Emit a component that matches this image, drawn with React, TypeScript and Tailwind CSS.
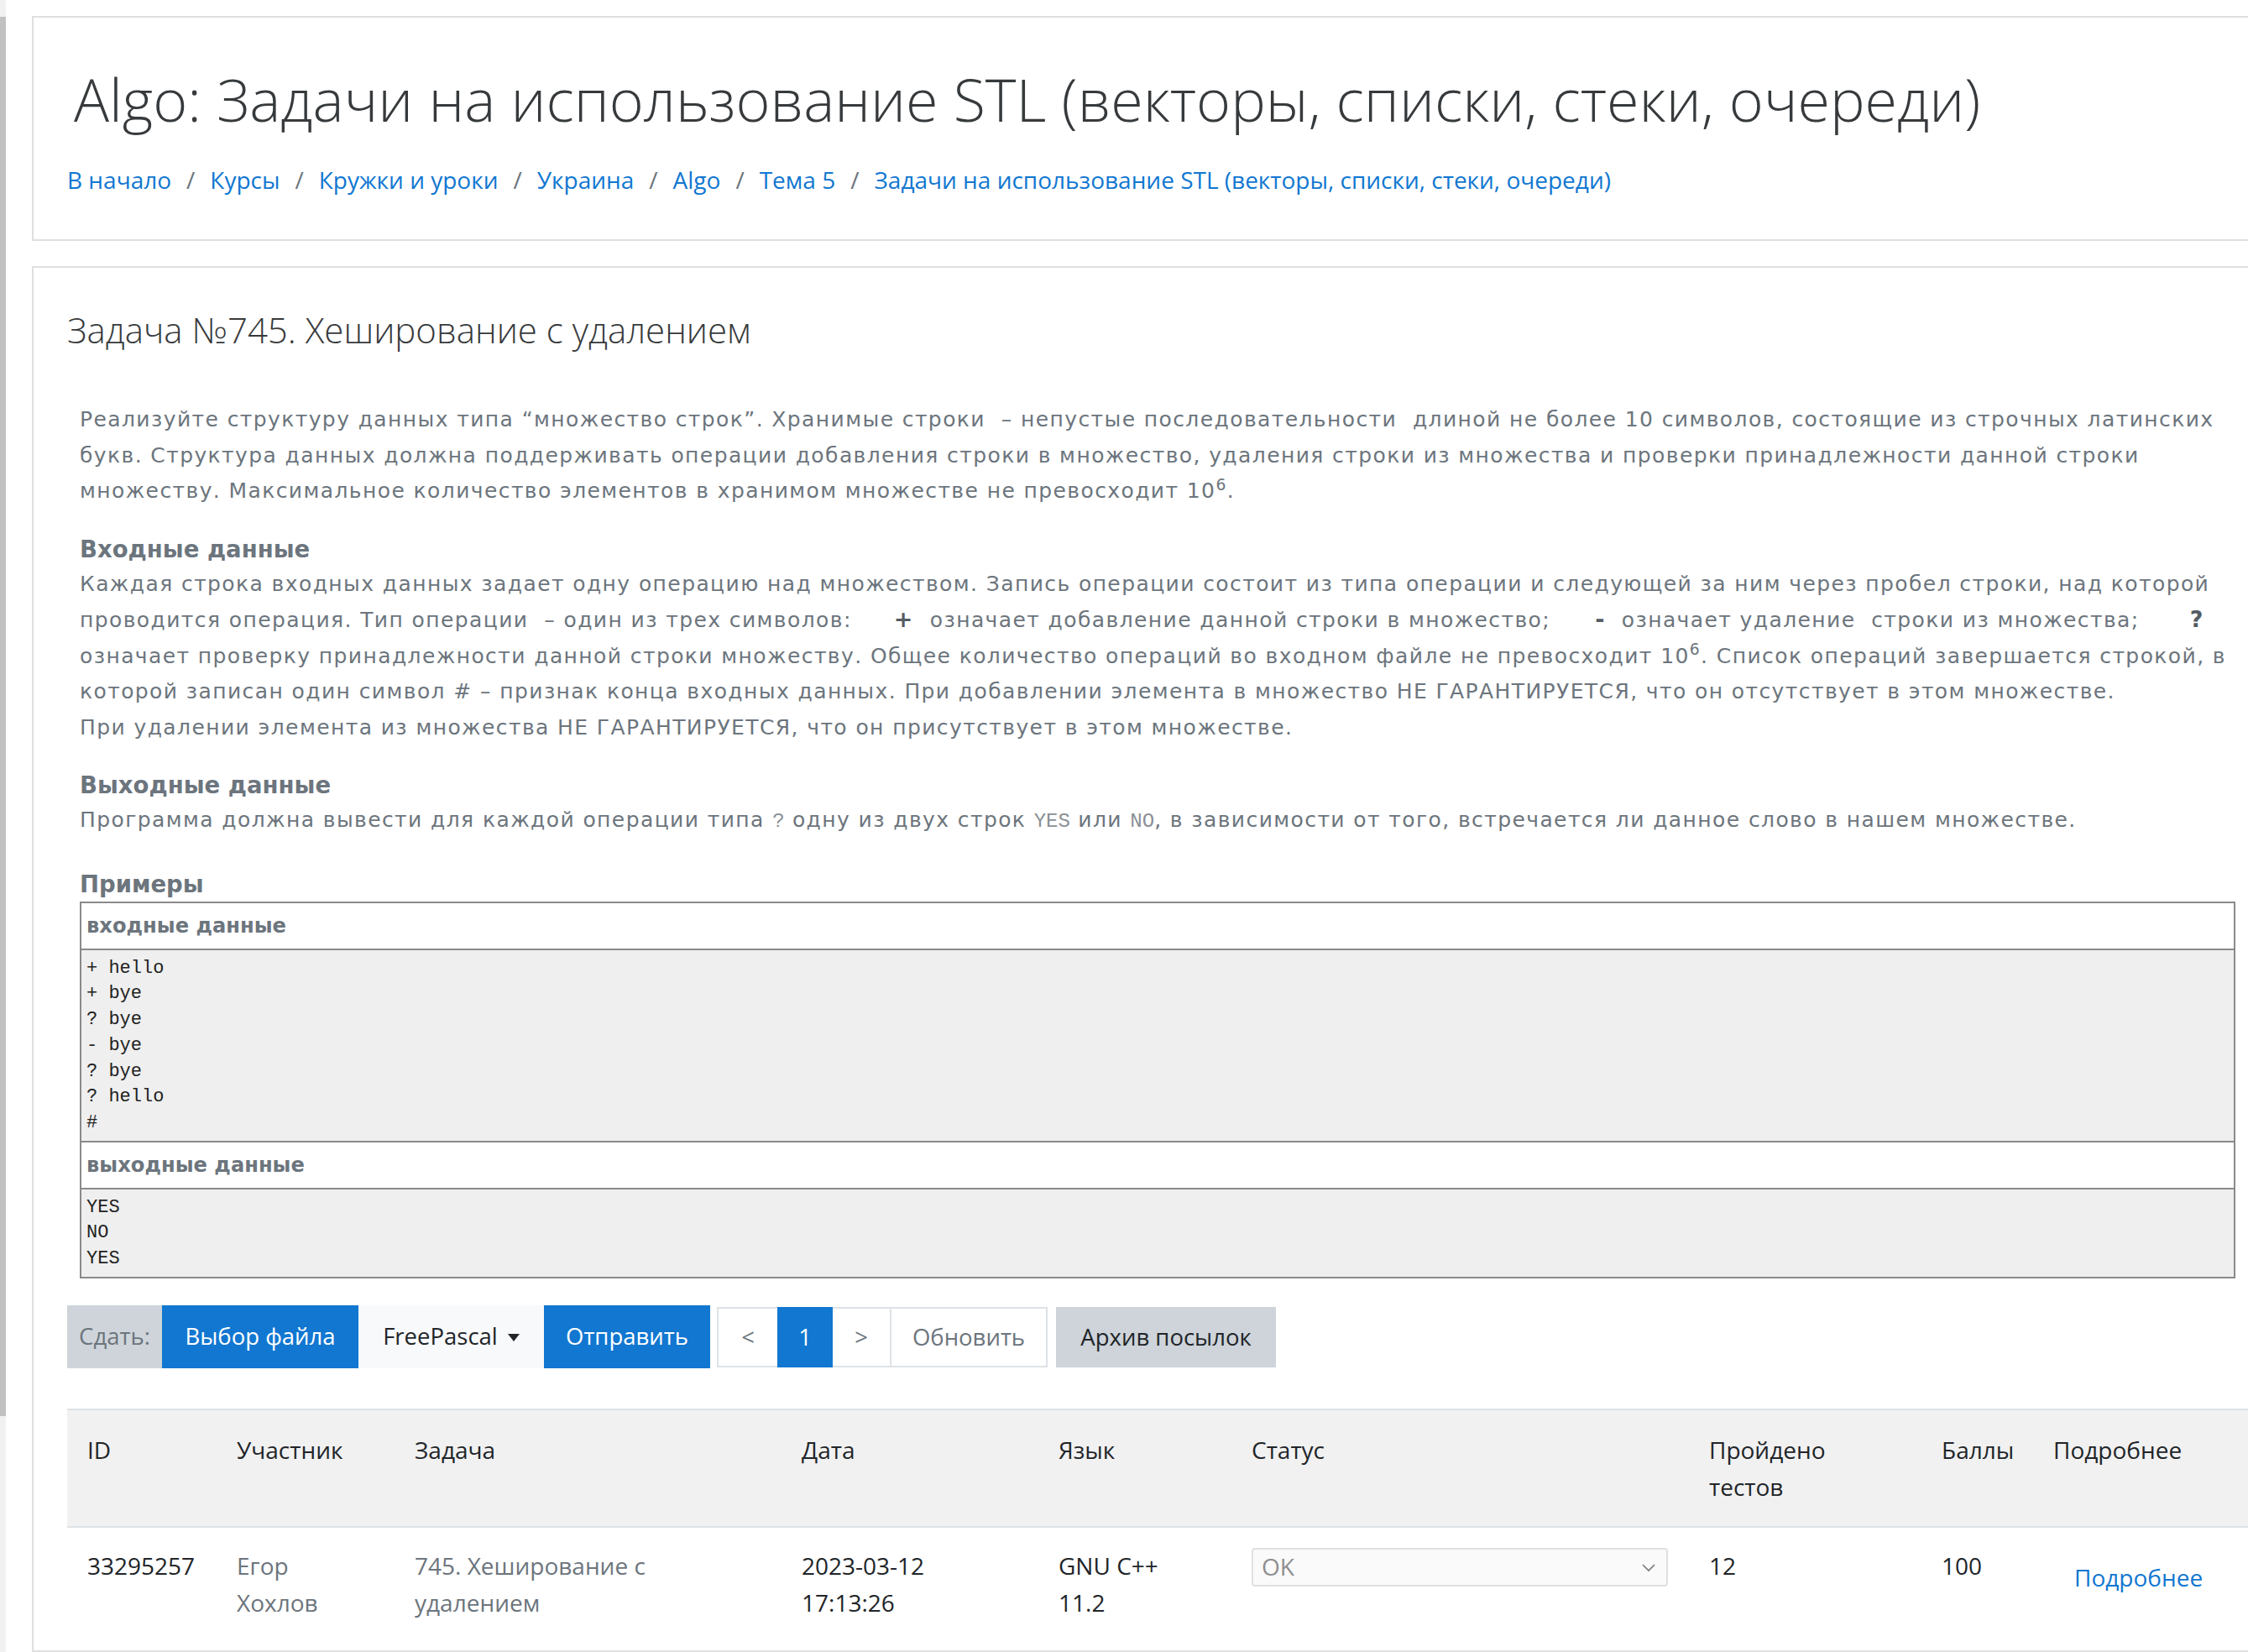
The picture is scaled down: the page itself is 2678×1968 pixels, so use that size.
import React from "react";

const crumbs = [
  "В начало",
  "Курсы",
  "Кружки и уроки",
  "Украина",
  "Algo",
  "Тема 5",
  "Задачи на использование STL (векторы, списки, стеки, очереди)",
];

function Card1() {
  return (
    <div className="h-[268px] border-2 border-[#dfdfdf] px-[40px] pt-[52px]">
      <div className="whitespace-nowrap pl-[8px] text-[70px] font-light leading-[90px] text-[#373a3c]">
        Algo: Задачи на использование STL (векторы, списки, стеки, очереди)
      </div>
      <div className="mt-[31px] flex whitespace-nowrap text-[28px] leading-[40px]">
        {crumbs.map((c, i) => (
          <React.Fragment key={c}>
            {i > 0 && <span className="px-[18px] text-[#6c757d]">/</span>}
            <span className="text-[#1177d1]">{c}</span>
          </React.Fragment>
        ))}
      </div>
    </div>
  );
}

function Code({ children }: { children: React.ReactNode }) {
  return <span className="font-['Liberation_Mono',monospace] text-[24px] tracking-normal text-[#8a9096]">{children}</span>;
}

function Statement() {
  return (
    <div className="mt-[59px] pl-[15px] pr-[17px] font-['DejaVu_Sans',sans-serif] text-[25px] leading-[42.5px] text-[#6c757d]">
      <div className="whitespace-pre tracking-[1.4px]">
        <div>Реализуйте структуру данных типа “множество строк”. Хранимые строки  – непустые последовательности  длиной не более 10 символов, состоящие из строчных латинских</div>
        <div>букв. Структура данных должна поддерживать операции добавления строки в множество, удаления строки из множества и проверки принадлежности данной строки</div>
        <div>
          множеству. Максимальное количество элементов в хранимом множестве не превосходит 10<sup>6</sup>.
        </div>
      </div>
      <div className="mt-[26px] text-[27.5px] font-bold leading-[42px] text-[#6c757d]">Входные данные</div>
      <div className="whitespace-pre tracking-[1.4px]">
        <div>Каждая строка входных данных задает одну операцию над множеством. Запись операции состоит из типа операции и следующей за ним через пробел строки, над которой</div>
        <div>
          проводится операция. Тип операции  – один из трех символов:
          <b className="ml-[50px] mr-[19px] text-[27px] text-[#555c63]">+</b>
          означает добавление данной строки в множество;
          <b className="ml-[53px] mr-[19px] text-[27px] text-[#555c63]">-</b>
          означает удаление  строки из множества;
          <b className="ml-[60px] text-[27px] text-[#555c63]">?</b>
        </div>
        <div>
          означает проверку принадлежности данной строки множеству. Общее количество операций во входном файле не превосходит 10<sup>6</sup>. Список операций завершается строкой, в
        </div>
        <div>которой записан один символ # – признак конца входных данных. При добавлении элемента в множество НЕ ГАРАНТИРУЕТСЯ, что он отсутствует в этом множестве.</div>
        <div>При удалении элемента из множества НЕ ГАРАНТИРУЕТСЯ, что он присутствует в этом множестве.</div>
      </div>
      <div className="mt-[26px] text-[27.5px] font-bold leading-[42px] text-[#6c757d]">Выходные данные</div>
      <div className="whitespace-pre tracking-[1.4px]">
        Программа должна вывести для каждой операции типа <Code>?</Code> одну из двух строк <Code>YES</Code> или <Code>NO</Code>, в зависимости от того, встречается ли данное слово в нашем множестве.
      </div>
      <div className="mt-[31px] text-[27.5px] font-bold leading-[42px] text-[#6c757d]">Примеры</div>
      <div className="border-2 border-[#8a8a8a]">
        <div className="h-[54px] bg-white px-[6px] text-[24.2px] font-bold leading-[54px] text-[#6c757d]">входные данные</div>
        <div className="h-[229px] border-t-2 border-[#8a8a8a] bg-[#efefef] px-[6px] pt-[7px] font-['Liberation_Mono',monospace] text-[22px] leading-[30.8px] text-[#222]">
          {["+ hello", "+ bye", "? bye", "- bye", "? bye", "? hello", "#"].map((l, i) => (
            <div key={i} className="whitespace-pre">{l}</div>
          ))}
        </div>
        <div className="h-[56px] border-t-2 border-[#8a8a8a] bg-white px-[6px] text-[24.2px] font-bold leading-[54px] text-[#6c757d]">выходные данные</div>
        <div className="h-[106px] border-t-2 border-[#8a8a8a] bg-[#efefef] px-[6px] pt-[7px] font-['Liberation_Mono',monospace] text-[22px] leading-[30.8px] text-[#222]">
          {["YES", "NO", "YES"].map((l, i) => (
            <div key={i}>{l}</div>
          ))}
        </div>
      </div>
    </div>
  );
}

function Toolbar() {
  return (
    <div className="mt-[32px] flex items-start text-[27.5px]">
      <div className="flex h-[75px] w-[113px] items-center justify-center bg-[#ced4da] text-[#6c757d]">Сдать:</div>
      <div className="flex h-[75px] w-[234px] items-center justify-center bg-[#1177d1] text-white">Выбор файла</div>
      <div className="flex h-[75px] w-[221px] items-center justify-center gap-[12px] bg-[#f8f9fa] text-[#212529]">
        <span>FreePascal</span>
        <span className="mt-[2px] h-0 w-0 border-x-[7px] border-t-[9px] border-x-transparent border-t-[#212529]" />
      </div>
      <div className="flex h-[75px] w-[198px] items-center justify-center bg-[#1177d1] text-white">Отправить</div>
      <div className="ml-[8px] mt-[2px] flex h-[72px] border-2 border-[#dee2e6] bg-white">
        <div className="flex w-[70px] items-center justify-center text-[#6c757d]">&lt;</div>
        <div className="-my-[2px] flex w-[66px] items-center justify-center bg-[#1177d1] text-white">1</div>
        <div className="flex w-[70px] items-center justify-center border-r-2 border-[#dee2e6] text-[#6c757d]">&gt;</div>
        <div className="flex w-[184px] items-center justify-center text-[#6c757d]">Обновить</div>
      </div>
      <div className="ml-[10px] mt-[2px] flex h-[72px] w-[262px] items-center justify-center bg-[#ced4da] text-[#212529]">Архив посылок</div>
    </div>
  );
}

const cols = "grid grid-cols-[178px_212px_461px_306px_230px_545px_277px_133px_1fr]";

function Submissions() {
  return (
    <div className="mt-[48px] text-[28px] leading-[44.4px] text-[#212529]">
      <div className={`${cols} h-[142px] border-y-2 border-[#dee2e6] bg-[#f1f1f1] pt-[25px]`}>
        <div className="pl-[24px]">ID</div>
        <div className="pl-[24px]">Участник</div>
        <div className="pl-[24px]">Задача</div>
        <div className="pl-[24px]">Дата</div>
        <div className="pl-[24px]">Язык</div>
        <div className="pl-[24px]">Статус</div>
        <div className="pl-[24px]">
          Пройдено
          <br />
          тестов
        </div>
        <div className="pl-[24px]">Баллы</div>
        <div className="pl-[24px]">Подробнее</div>
      </div>
      <div className={`${cols} pt-[23px]`}>
        <div className="pl-[24px]">33295257</div>
        <div className="pl-[24px] text-[#6c757d]">
          Егор
          <br />
          Хохлов
        </div>
        <div className="pl-[24px] text-[#6c757d]">
          745. Хеширование с
          <br />
          удалением
        </div>
        <div className="pl-[24px]">
          2023-03-12
          <br />
          17:13:26
        </div>
        <div className="pl-[24px]">
          GNU C++
          <br />
          11.2
        </div>
        <div className="pl-[24px] pr-[25px] pt-[1px]">
          <div className="flex h-[46px] items-center justify-between rounded-[4px] border-2 border-[#e0e0e0] bg-[#fafafa] pl-[10px] pr-[12px] text-[#8f8f8f]">
            <span>OK</span>
            <svg width="18" height="12" viewBox="0 0 18 12" fill="none" stroke="#777" strokeWidth="1.6">
              <path d="M2 3l7 7 7-7" />
            </svg>
          </div>
        </div>
        <div className="pl-[24px]">12</div>
        <div className="pl-[24px]">100</div>
        <div className="pl-[49px] pt-[14px] text-[#1177d1]">Подробнее</div>
      </div>
    </div>
  );
}

function Card2() {
  return (
    <div className="mt-[30px] min-h-[1651px] border-2 border-[#dfdfdf] px-[40px] pt-[46px]">
      <div className="text-[42px] font-light leading-[55px] text-[#373a3c]">Задача №745. Хеширование с удалением</div>
      <Statement />
      <Toolbar />
      <Submissions />
    </div>
  );
}

export default function App() {
  return (
    <div className="flex min-h-[1968px] w-[2678px] overflow-hidden bg-white font-['Open_Sans','Noto_Sans',sans-serif]">
      <div className="w-[7px] flex-none bg-[#f1f1f1] pt-[20px]">
        <div className="h-[1667px] bg-[#c1c1c1]" />
      </div>
      <main className="w-[2715px] flex-none pl-[31px] pt-[19px]">
        <Card1 />
        <Card2 />
      </main>
    </div>
  );
}
